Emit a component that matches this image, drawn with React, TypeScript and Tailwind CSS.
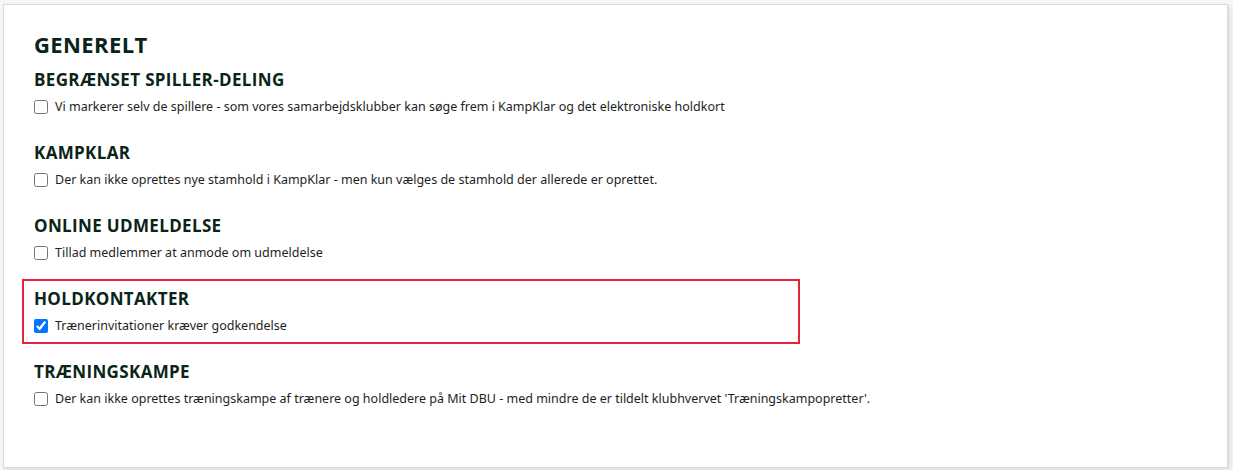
import React from "react";

const sections = [
  {
    title: "BEGRÆNSET SPILLER-DELING",
    text: "Vi markerer selv de spillere - som vores samarbejdsklubber kan søge frem i KampKlar og det elektroniske holdkort",
    checked: false,
    highlight: false,
  },
  {
    title: "KAMPKLAR",
    text: "Der kan ikke oprettes nye stamhold i KampKlar - men kun vælges de stamhold der allerede er oprettet.",
    checked: false,
    highlight: false,
  },
  {
    title: "ONLINE UDMELDELSE",
    text: "Tillad medlemmer at anmode om udmeldelse",
    checked: false,
    highlight: false,
  },
  {
    title: "HOLDKONTAKTER",
    text: "Trænerinvitationer kræver godkendelse",
    checked: true,
    highlight: true,
  },
  {
    title: "TRÆNINGSKAMPE",
    text: "Der kan ikke oprettes træningskampe af trænere og holdledere på Mit DBU - med mindre de er tildelt klubhvervet 'Træningskampopretter'.",
    checked: false,
    highlight: false,
  },
];

export default function App() {
  return (
    <div className="w-[1233px] h-[470px] bg-[#f7f7f7] pt-[4px] pl-[3px]">
      <div className="w-[1225px] h-[464px] bg-white border border-[#dadada] shadow-[2px_2px_5px_rgba(0,0,0,0.12)] pt-[23px] pl-[30px]">
        <h1
          className="h-[32px] leading-[32px] text-[22px] font-bold text-[#0a2518] tracking-[0.4px]"
          style={{ fontFamily: "'Open Sans', 'Noto Sans', sans-serif" }}
        >
          GENERELT
        </h1>
        <div className="-ml-[12px] flex flex-col gap-[8px]">
          {sections.map((s) => (
            <div
              key={s.title}
              className={`w-[778px] border-2 px-[10px] pt-[6px] pb-[6px] ${
                s.highlight ? "border-[#e8213a]" : "border-transparent"
              }`}
            >
              <h2
                className="h-[24px] leading-[24px] text-[17px] font-bold text-[#0a2518] tracking-[0.35px]"
                style={{ fontFamily: "'Open Sans', 'Noto Sans', sans-serif" }}
              >
                {s.title}
              </h2>
              <label
                className="mt-[5px] h-[20px] flex items-center gap-[7px] text-[12.5px] text-[#1e1e1e] whitespace-nowrap"
                style={{ fontFamily: "'Noto Sans', 'Open Sans', sans-serif" }}
              >
                <input
                  type="checkbox"
                  defaultChecked={s.checked}
                  className="m-0 w-[14px] h-[14px] shrink-0"
                />
                <span>{s.text}</span>
              </label>
            </div>
          ))}
        </div>
      </div>
    </div>
  );
}
